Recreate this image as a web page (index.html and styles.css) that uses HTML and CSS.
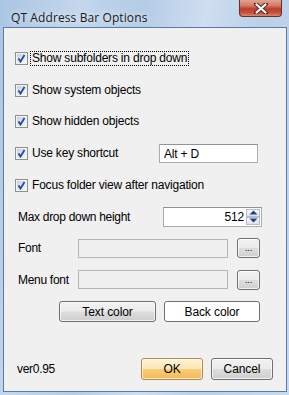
FILE: index.html
```html
<!DOCTYPE html>
<html lang="en">
<head>
    <meta charset="UTF-8">
    <title>QT Address Bar Options</title>
    <link rel="stylesheet" href="styles.css">
</head>
<body>
    <div class="window">
        <div class="titlebar">
            <span class="title">QT Address Bar Options</span>
            <div class="close">
                <svg width="18" height="11" viewBox="0 0 18 11">
                    <path d="M4 1 L14 10 M14 1 L4 10" stroke="#4a2a26" stroke-width="4" stroke-linecap="round"/>
                    <path d="M4.5 1.5 L13.5 9.5 M13.5 1.5 L4.5 9.5" stroke="#fff" stroke-width="2.2" stroke-linecap="round"/>
                </svg>
            </div>
        </div>

        <div class="client">
            <div class="form">
                <div class="row check-row">
                    <span class="check"></span>
                    <span class="check-label focused">Show subfolders in drop down</span>
                </div>
                <div class="row check-row">
                    <span class="check"></span>
                    <span class="check-label">Show system objects</span>
                </div>
                <div class="row check-row">
                    <span class="check"></span>
                    <span class="check-label">Show hidden objects</span>
                </div>
                <div class="row check-row">
                    <span class="check"></span>
                    <span class="check-label key-label">Use key shortcut</span>
                    <div class="textbox wide">Alt + D</div>
                </div>
                <div class="row check-row">
                    <span class="check"></span>
                    <span class="check-label">Focus folder view after navigation</span>
                </div>
                <div class="row">
                    <span class="field-label long">Max drop down height</span>
                    <div class="textbox wide spin">
                        <span class="spin-value">512</span>
                        <div class="spin-buttons">
                            <span class="spin-btn"><svg width="9" height="5" viewBox="0 0 9 5"><path d="M0.5 4.5 L4.5 0.5 L8.5 4.5 Z" fill="#1f3f8f"/></svg></span>
                            <span class="spin-btn"><svg width="9" height="5" viewBox="0 0 9 5"><path d="M0.5 0.5 L4.5 4.5 L8.5 0.5 Z" fill="#1f3f8f"/></svg></span>
                        </div>
                    </div>
                </div>
                <div class="row">
                    <span class="field-label">Font</span>
                    <div class="textbox disabled"></div>
                    <button class="btn dots">...</button>
                </div>
                <div class="row">
                    <span class="field-label">Menu font</span>
                    <div class="textbox disabled"></div>
                    <button class="btn dots">...</button>
                </div>
                <div class="row color-row">
                    <button class="btn color-btn">Text color</button>
                    <button class="btn color-btn white">Back color</button>
                </div>
            </div>

            <div class="footer">
                <span class="version">ver0.95</span>
                <button class="btn action ok">OK</button>
                <button class="btn action">Cancel</button>
            </div>
        </div>
    </div>
</body>
</html>
```

FILE: styles.css
```css
body {
    margin: 0;
    font-family: 'Liberation Sans', Arial, sans-serif;
    font-size: 12px;
    color: #000;
}

.window {
    width: 289px;
    height: 395px;
    box-sizing: border-box;
    padding: 0 2px 3px 3px;
    display: flex;
    flex-direction: column;
    background: linear-gradient(100deg, #aac5e3 0%, #c3d6ec 22%, #b4cce6 40%, #cfdef0 58%, #b9d0e9 74%, #c8daee 100%);
}

.titlebar {
    height: 27px;
    flex-shrink: 0;
    display: flex;
    justify-content: space-between;
    align-items: flex-start;
}

.title {
    margin: 9px 0 0 8px;
    font-family: 'Open Sans', 'Liberation Sans', sans-serif;
    font-size: 12px;
    letter-spacing: 0.1px;
    color: #1a1a1a;
    text-shadow: 0 0 6px rgba(255, 255, 255, 0.9);
}

.close {
    width: 43px;
    height: 17px;
    margin-right: 5px;
    box-sizing: border-box;
    border: 1px solid #6b2f27;
    border-top: none;
    border-radius: 0 0 4px 4px;
    background: linear-gradient(#e2a491 0%, #d37a66 35%, #bf3e2a 55%, #c8503a 80%, #dc8a6e 100%);
    display: flex;
    align-items: center;
    justify-content: center;
}

.client {
    flex: 1;
    box-sizing: border-box;
    background-color: #f0f0f0;
    border: 1px solid #5a7aa0;
    display: flex;
    flex-direction: column;
}

.form {
    padding-top: 15px;
}

.row {
    height: 31.6px;
    display: flex;
    align-items: center;
}

.check-row {
    padding-left: 11px;
}

.check {
    width: 13px;
    height: 13px;
    flex-shrink: 0;
    box-sizing: border-box;
    border: 1px solid #8f8f8f;
    background-color: #f4f4f4;
    background-image:
        url("data:image/svg+xml,%3Csvg xmlns='http://www.w3.org/2000/svg' width='11' height='11'%3E%3Cpath d='M2.5 5.5 L4.5 8.5 L8.5 2' stroke='%23254a9e' stroke-width='1.8' fill='none'/%3E%3C/svg%3E"),
        linear-gradient(135deg, #c9ccd1 0%, #e3e5e8 50%, #f7f7f7 100%);
    background-size: 11px 11px, 9px 9px;
    background-position: 0 0, 1px 1px;
    background-repeat: no-repeat;
}

.check-label {
    margin-left: 3px;
    padding: 0 1px;
    line-height: 13px;
    letter-spacing: -0.2px;
}

.check-label.focused {
    outline: 1px dotted #000;
}

.key-label {
    width: 126px;
}

.field-label {
    padding-left: 14px;
    width: 60px;
    letter-spacing: -0.3px;
}

.field-label.long {
    width: 145px;
}

.textbox {
    height: 19px;
    box-sizing: border-box;
    border: 1px solid #abadb3;
    border-top-color: #8f949c;
    background-color: #fff;
    padding: 0 4px;
    display: flex;
    align-items: center;
    letter-spacing: -0.2px;
}

.textbox.wide {
    width: 99px;
}

.textbox.disabled {
    width: 150px;
    background-color: #f0f0f0;
    border-color: #b5b5b5;
}

.spin {
    height: 20px;
    padding: 0 1px 0 4px;
    justify-content: flex-end;
}

.spin-value {
    margin-right: 2px;
}

.spin-buttons {
    width: 14px;
    height: 16px;
    display: flex;
    flex-direction: column;
}

.spin-btn {
    flex: 1;
    box-sizing: border-box;
    border: 1px solid #b9bdc4;
    background: linear-gradient(#f6f7f9, #dde2ea);
    display: flex;
    align-items: center;
    justify-content: center;
}

.btn {
    font-family: 'Liberation Sans', Arial, sans-serif;
    font-size: 12px;
    color: #000;
    padding: 0;
    box-sizing: border-box;
    border: 1px solid #707070;
    border-radius: 3px;
    background: linear-gradient(#f2f2f2 0%, #ebebeb 48%, #dddddd 52%, #cfcfcf 100%);
    box-shadow: inset 0 0 0 1px rgba(255, 255, 255, 0.7);
    letter-spacing: -0.1px;
}

.dots {
    width: 23px;
    height: 20px;
    margin-left: 9px;
    font-size: 9px;
    line-height: 14px;
}

.color-row {
    padding-left: 55px;
    gap: 8px;
}

.color-btn {
    width: 97px;
    height: 21px;
}

.color-btn.white {
    width: 96px;
    background: #fff;
    box-shadow: none;
}

.footer {
    margin-top: auto;
    margin-bottom: 11px;
    padding: 0 13px 0 13px;
    display: flex;
    align-items: center;
    gap: 8px;
}

.version {
    margin-right: auto;
    letter-spacing: -0.3px;
}

.action {
    width: 62px;
    height: 22px;
}

.ok {
    border-color: #b8893c;
    background: linear-gradient(#fdf4dc 0%, #fbe6b4 48%, #f7cc7a 52%, #f4b958 100%);
}
```
